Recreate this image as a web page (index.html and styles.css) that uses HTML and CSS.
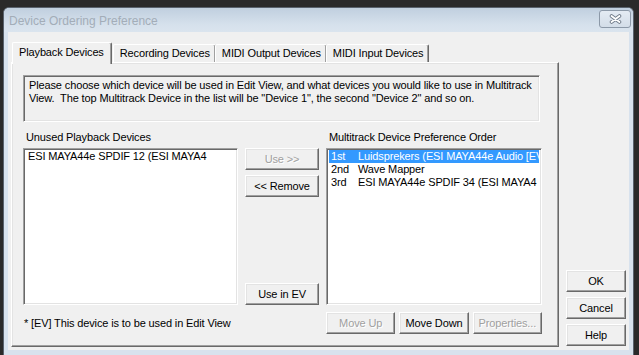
FILE: index.html
```html
<!DOCTYPE html>
<html lang="en">
<head>
  <meta charset="UTF-8">
  <meta name="viewport" content="width=device-width, initial-scale=1.0">
  <title>Device Ordering Preference</title>
  <link rel="stylesheet" href="styles.css">
</head>
<body>
  <div class="window" role="dialog" aria-labelledby="dialog-title">
    <div class="titlebar">
      <span class="title" id="dialog-title">Device Ordering Preference</span>
      <button class="close-button" aria-label="Close">
        <svg width="13" height="10" viewBox="0 0 13 10">
          <path d="M2.5 2 L10.5 8 M10.5 2 L2.5 8" stroke="#707b89" stroke-width="3.6" stroke-linecap="round" fill="none"/>
          <path d="M2.5 2 L10.5 8 M10.5 2 L2.5 8" stroke="#ffffff" stroke-width="1.8" stroke-linecap="round" fill="none"/>
        </svg>
      </button>
    </div>

    <div class="client">
      <div class="tab-control">
        <div class="tab-strip" role="tablist">
          <div class="tab selected" role="tab">Playback Devices</div>
          <div class="tab" role="tab">Recording Devices</div>
          <div class="tab" role="tab">MIDI Output Devices</div>
          <div class="tab" role="tab">MIDI Input Devices</div>
        </div>

        <div class="tab-panel" role="tabpanel">
          <div class="info-box">
            Please choose which device will be used in Edit View, and what devices you would like to use in Multitrack<br>
            View.&nbsp; The top Multitrack Device in the list will be "Device 1", the second "Device 2" and so on.
          </div>

          <div class="field-label">Unused Playback Devices</div>
          <div></div>
          <div class="field-label">Multitrack Device Preference Order</div>

          <div class="listbox">
            <div class="list-item">ESI MAYA44e SPDIF 12 (ESI MAYA4</div>
          </div>

          <div class="move-buttons">
            <button class="btn" disabled>Use &gt;&gt;</button>
            <button class="btn">&lt;&lt; Remove</button>
            <button class="btn bottom">Use in EV</button>
          </div>

          <div class="listbox">
            <div class="list-item selected"><span class="rank">1st</span>Luidsprekers (ESI MAYA44e Audio [EV]</div>
            <div class="list-item"><span class="rank">2nd</span>Wave Mapper</div>
            <div class="list-item"><span class="rank">3rd</span>ESI MAYA44e SPDIF 34 (ESI MAYA4</div>
          </div>

          <div class="footnote">* [EV] This device is to be used in Edit View</div>
          <div></div>
          <div class="order-buttons">
            <button class="btn" disabled>Move Up</button>
            <button class="btn">Move Down</button>
            <button class="btn" disabled>Properties...</button>
          </div>
        </div>
      </div>

      <div class="dialog-buttons">
        <button class="btn">OK</button>
        <button class="btn">Cancel</button>
        <button class="btn">Help</button>
      </div>
    </div>
  </div>
</body>
</html>
```

FILE: styles.css
```css
body {
  margin: 0;
  height: 355px;
  overflow: hidden;
  background: #2a2a2a;
  font-family: "Liberation Sans", Arial, sans-serif;
  font-size: 11px;
  line-height: 13px;
  letter-spacing: -0.13px;
  color: #000;
}

.window {
  margin: 7px 0 0 3px;
  width: 629px;
  height: 350px;
  border: 1px solid #59626d;
  border-bottom: none;
  border-radius: 6px 6px 0 0;
  background: #d8e2ed;
  overflow: hidden;
}

.titlebar {
  height: 24px;
  display: flex;
  align-items: center;
  justify-content: space-between;
  padding: 0 2px 0 5px;
  background: linear-gradient(#c0cfdf, #d6e1ec 70%, #dae4ee);
}

.title {
  margin-top: 2px;
  font-size: 12px;
  letter-spacing: 0;
  color: #a3adb8;
}

.close-button {
  width: 32px;
  height: 18px;
  margin-top: -3px;
  padding: 0;
  display: flex;
  align-items: center;
  justify-content: center;
  border: 1px solid #8c99a8;
  border-radius: 3px;
  background: linear-gradient(#e4ebf3, #d3dde8);
}

.client {
  margin: 0 4px;
  height: 318px;
  box-sizing: border-box;
  padding: 7px 0 3px 3px;
  display: flex;
  align-items: flex-end;
  gap: 7px;
  background: #f0f0f0;
}

/* tab control */

.tab-control {
  width: 548px;
  display: flex;
  flex-direction: column;
}

.tab-strip {
  height: 21px;
  display: flex;
  align-items: flex-end;
  padding-left: 1px;
}

.tab {
  position: relative;
  height: 17px;
  padding: 0 5px 0 6px;
  margin-left: -1px;
  border: 1px solid;
  border-color: #fff #696969 transparent #fff;
  border-bottom: none;
  border-radius: 2px 2px 0 0;
  box-shadow: inset -1px 0 #a0a0a0;
  background: #f0f0f0;
  line-height: 17px;
  white-space: nowrap;
}

.tab:first-child {
  margin-left: 0;
}

.tab.selected {
  z-index: 1;
  height: 21px;
  margin-bottom: -2px;
  padding: 0 7px 0 6px;
  line-height: 19px;
}

.tab.selected + .tab {
  margin-left: 1px;
}

.tab-panel {
  display: grid;
  grid-template-columns: 215px 74px 216px;
  grid-template-rows: auto auto 157px auto;
  column-gap: 7px;
  padding: 12px 0 12px 11px;
  border: 1px solid;
  border-color: #fff #696969 #696969 #fff;
  box-shadow: inset -1px -1px #a0a0a0, inset 1px 1px #e3e3e3;
}

.info-box {
  grid-column: 1 / 4;
  height: 47px;
  box-sizing: border-box;
  margin-right: 2px;
  padding: 3px 5px;
  border: 1px solid;
  border-color: #a0a0a0 #fff #fff #a0a0a0;
  box-shadow: inset 1px 1px #696969, inset -1px -1px #e3e3e3;
  white-space: nowrap;
}

.field-label {
  margin: 9px 0 4px 3px;
  white-space: nowrap;
}

.listbox {
  padding: 1px 2px;
  border: 1px solid;
  border-color: #a0a0a0 #fff #fff #a0a0a0;
  box-shadow: inset 1px 1px #696969, inset -1px -1px #e3e3e3;
  background: #fff;
  overflow: hidden;
}

.list-item {
  height: 13px;
  padding-left: 2px;
  white-space: nowrap;
  overflow: hidden;
}

.list-item.selected {
  background: #3399ff;
  color: #fff;
}

.rank {
  display: inline-block;
  width: 27px;
}

.move-buttons {
  display: flex;
  flex-direction: column;
  gap: 5px;
}

.move-buttons .bottom {
  margin-top: auto;
}

.footnote {
  align-self: center;
  margin: 7px 0 0 1px;
  white-space: nowrap;
}

.order-buttons {
  display: flex;
  gap: 4px;
  margin-top: 7px;
}

.order-buttons .btn {
  width: 70px;
}

/* buttons */

.btn {
  height: 22px;
  padding: 0;
  border: 1px solid;
  border-color: #fff #696969 #696969 #fff;
  box-shadow: inset -1px -1px #a0a0a0, inset 1px 1px #e3e3e3;
  background: #f0f0f0;
  font-family: inherit;
  font-size: 11px;
  letter-spacing: -0.13px;
  color: #000;
}

.btn:disabled {
  color: #a0a0a0;
  text-shadow: 1px 1px #fff;
}

.dialog-buttons {
  display: flex;
  flex-direction: column;
  gap: 5px;
  margin-bottom: 1px;
}

.dialog-buttons .btn {
  width: 60px;
}
```
